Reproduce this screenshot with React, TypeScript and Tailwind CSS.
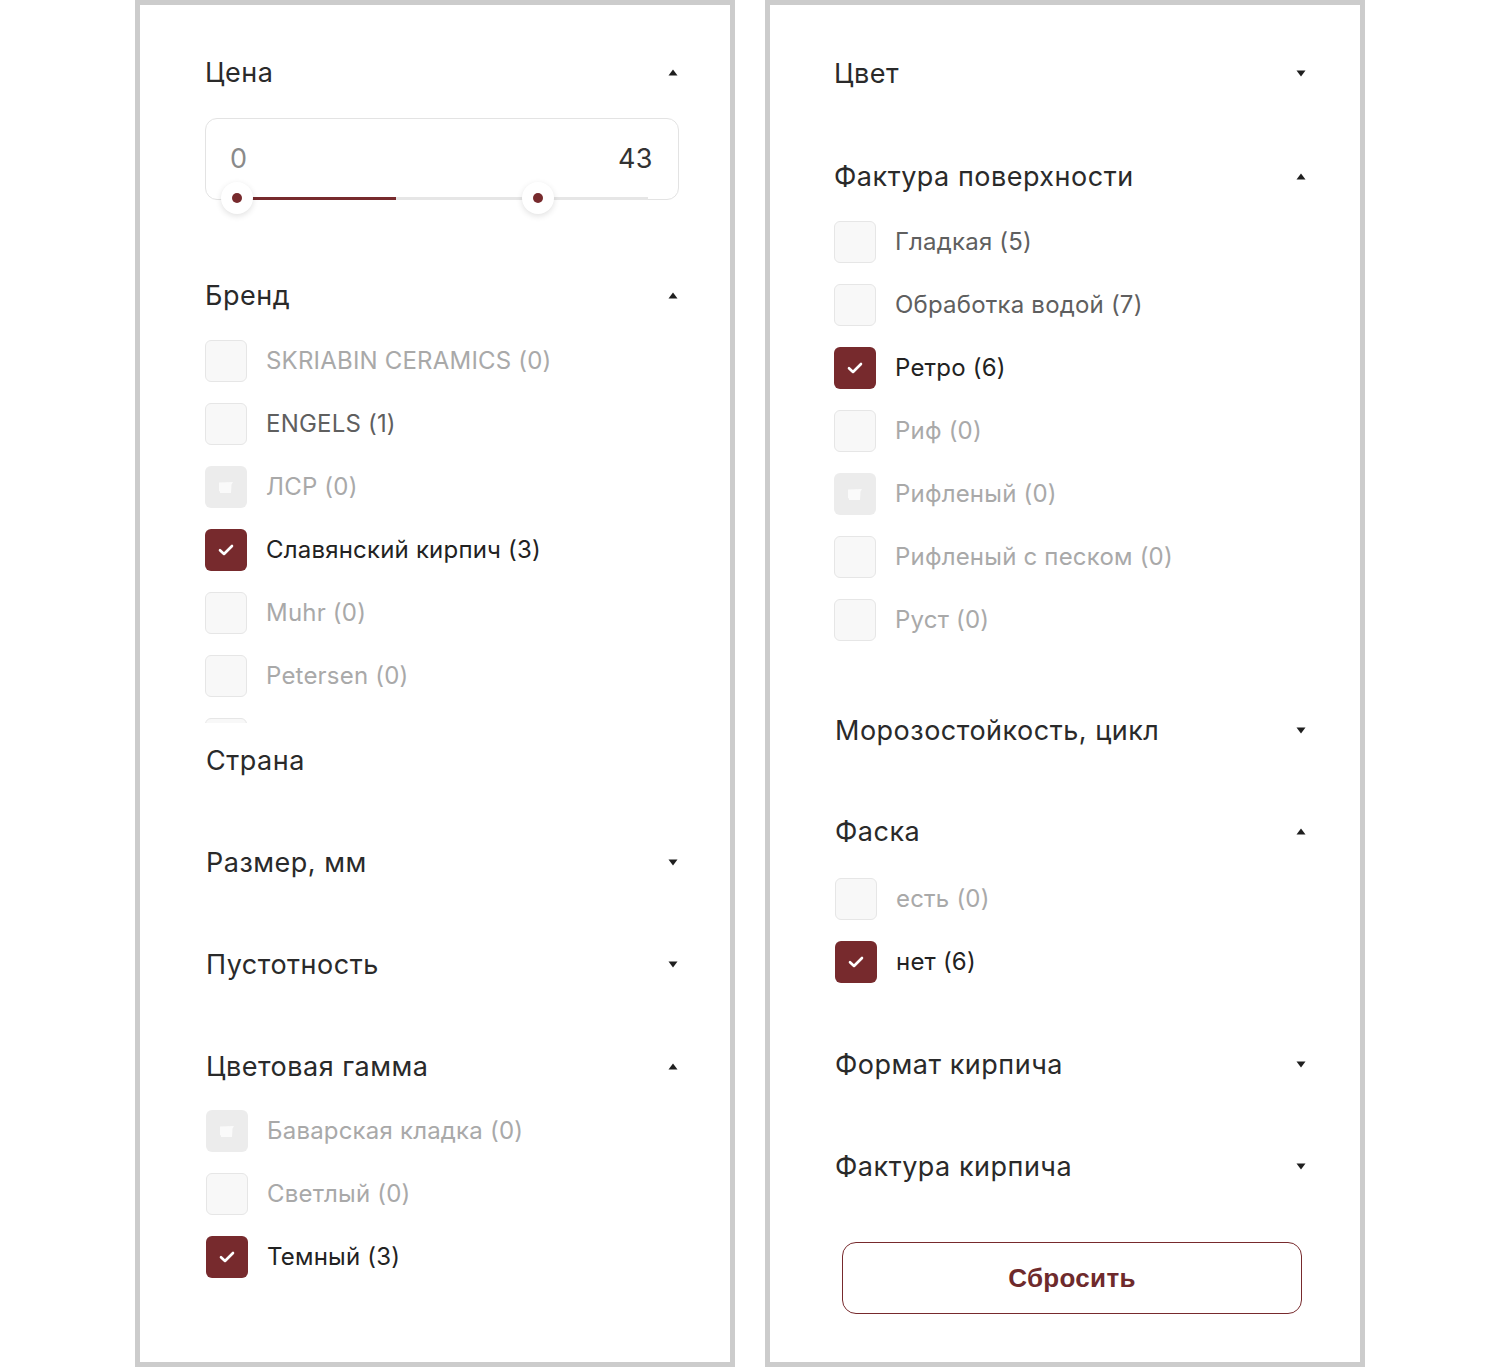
import React from "react";

const FONT = { fontFamily: "Inter, 'Noto Sans', sans-serif" };

type State = "empty" | "disabled" | "blocked" | "checked" | "active";

function Arrow({ up }: { up: boolean }) {
  return (
    <svg width="10" height="7" viewBox="0 0 10 7" className="shrink-0">
      {up ? <path d="M5 0.5 L9.5 6.5 L0.5 6.5 Z" fill="#1f1f1f" /> : <path d="M0.5 0.5 L9.5 0.5 L5 6.5 Z" fill="#1f1f1f" />}
    </svg>
  );
}

function Heading({ title, arrow }: { title: string; arrow?: "up" | "down" }) {
  return (
    <div className="flex h-[40px] items-center justify-between pr-[1px]">
      <span className="text-[27px] leading-none tracking-[0.5px] text-[#2a2a2a]">{title}</span>
      {arrow ? <Arrow up={arrow === "up"} /> : null}
    </div>
  );
}

function Box({ state }: { state: State }) {
  if (state === "checked") {
    return (
      <div className="flex h-[42px] w-[42px] shrink-0 items-center justify-center rounded-[6px] bg-[#772a2d]">
        <svg width="16" height="12" viewBox="0 0 16 12">
          <path d="M2 6.2 L6 10 L14 2" fill="none" stroke="#ffffff" strokeWidth="2.6" strokeLinecap="round" strokeLinejoin="round" />
        </svg>
      </div>
    );
  }
  if (state === "blocked") {
    return (
      <div className="flex h-[42px] w-[42px] shrink-0 items-center justify-center rounded-[6px] bg-[#ececec]">
        <svg width="16" height="13" viewBox="0 0 16 13">
          <path d="M1 1.5 L15 1 L13.5 3.5 L13 12 L2 12 L2 10.5 L1 10 Z" fill="#fafafa" />
        </svg>
      </div>
    );
  }
  return <div className="h-[42px] w-[42px] shrink-0 rounded-[6px] border border-[#e6e6e6] bg-[#f8f8f8]" />;
}

function Row({ label, state }: { label: string; state: State }) {
  const color =
    state === "checked" ? "text-[#222222]" : state === "active" ? "text-[#5f5f5f]" : "text-[#a9a9a9]";
  return (
    <div className="flex h-[42px] items-center gap-[19px]">
      <Box state={state} />
      {label ? <span className={`text-[24px] leading-none tracking-[0.2px] ${color}`}>{label}</span> : null}
    </div>
  );
}

function Rows({ items }: { items: [string, State][] }) {
  return (
    <div className="flex flex-col gap-[21px]">
      {items.map(([l, s], i) => (
        <Row key={i} label={l} state={s} />
      ))}
    </div>
  );
}

function Price() {
  return (
    <div className="relative mt-[26px] h-[82px] rounded-[12px] border border-[#e3e3e3] bg-white">
      <div className="flex h-[78px] items-center justify-between pl-[24px] pr-[25px] pt-[1px]">
        <span className="text-[27px] leading-none tracking-[0.5px] text-[#8a8a8a]">0</span>
        <span className="text-[27px] leading-none tracking-[0.5px] text-[#333333]">43</span>
      </div>
      <div className="absolute left-[30px] right-[30px] top-[78px] h-[3px]">
        <div className="absolute left-[0px] right-[0px] top-0 h-[3px] bg-[#e6e6e6]" />
        <div className="absolute left-[14px] top-0 h-[3px] w-[146px] bg-[#772a2d]" />
        <div className="absolute left-[-15px] top-[-15px] flex h-[32px] w-[32px] items-center justify-center rounded-full bg-white shadow-[0_2px_6px_rgba(0,0,0,0.12)]">
          <div className="h-[10px] w-[10px] rounded-full bg-[#772a2d]" />
        </div>
        <div className="absolute left-[286px] top-[-15px] flex h-[32px] w-[32px] items-center justify-center rounded-full bg-white shadow-[0_2px_6px_rgba(0,0,0,0.12)]">
          <div className="h-[10px] w-[10px] rounded-full bg-[#772a2d]" />
        </div>
      </div>
    </div>
  );
}

export default function App() {
  return (
    <div className="flex min-h-[1367px] justify-center gap-[30px] bg-white" style={FONT}>
      {/* Left panel */}
      <div className="flex h-[1367px] w-[600px] flex-col border-[5px] border-[#cccccc] pl-[65px] pr-[51px] pt-[47px]">
        <Heading title="Цена" arrow="up" />
        <Price />
        <div className="mt-[75px]">
          <Heading title="Бренд" arrow="up" />
        </div>
        <div className="mt-[25px] h-[383px] overflow-hidden">
          <Rows
            items={[
              ["SKRIABIN CERAMICS (0)", "empty"],
              ["ENGELS (1)", "active"],
              ["ЛСР (0)", "blocked"],
              ["Славянский кирпич (3)", "checked"],
              ["Muhr (0)", "empty"],
              ["Petersen (0)", "empty"],
              ["", "empty"],
            ]}
          />
        </div>
        <div className="mt-[17px] pl-[1px]">
          <Heading title="Страна" />
        </div>
        <div className="mt-[62px] pl-[1px]">
          <Heading title="Размер, мм" arrow="down" />
        </div>
        <div className="mt-[62px] pl-[1px]">
          <Heading title="Пустотность" arrow="down" />
        </div>
        <div className="mt-[62px] pl-[1px]">
          <Heading title="Цветовая гамма" arrow="up" />
        </div>
        <div className="mt-[24px] pl-[1px]">
          <Rows
            items={[
              ["Баварская кладка (0)", "blocked"],
              ["Светлый (0)", "empty"],
              ["Темный (3)", "checked"],
            ]}
          />
        </div>
      </div>

      {/* Right panel */}
      <div className="flex h-[1367px] w-[600px] flex-col border-[5px] border-[#cccccc] pl-[64px] pr-[53px] pt-[48px]">
        <Heading title="Цвет" arrow="down" />
        <div className="mt-[63px]">
          <Heading title="Фактура поверхности" arrow="up" />
        </div>
        <div className="mt-[25px]">
          <Rows
            items={[
              ["Гладкая (5)", "active"],
              ["Обработка водой (7)", "active"],
              ["Ретро (6)", "checked"],
              ["Риф (0)", "empty"],
              ["Рифленый (0)", "blocked"],
              ["Рифленый с песком (0)", "empty"],
              ["Руст (0)", "empty"],
            ]}
          />
        </div>
        <div className="mt-[69px] pl-[1px]">
          <Heading title="Морозостойкость, цикл" arrow="down" />
        </div>
        <div className="mt-[61px] pl-[1px]">
          <Heading title="Фаска" arrow="up" />
        </div>
        <div className="mt-[27px] pl-[1px]">
          <Rows
            items={[
              ["есть (0)", "empty"],
              ["нет (6)", "checked"],
            ]}
          />
        </div>
        <div className="mt-[61px] pl-[1px]">
          <Heading title="Формат кирпича" arrow="down" />
        </div>
        <div className="mt-[62px] pl-[1px]">
          <Heading title="Фактура кирпича" arrow="down" />
        </div>
        <div className="mt-[56px] pl-[8px] pr-[5px]">
          <button
            className="flex h-[72px] w-full items-center justify-center rounded-[14px] border-[1.5px] border-[#772a2d] bg-white text-[26px] font-bold tracking-[0.3px] text-[#6e2a2c]"
            style={{ fontFamily: "'Liberation Sans', Arial, sans-serif" }}
          >
            Сбросить
          </button>
        </div>
      </div>
    </div>
  );
}
